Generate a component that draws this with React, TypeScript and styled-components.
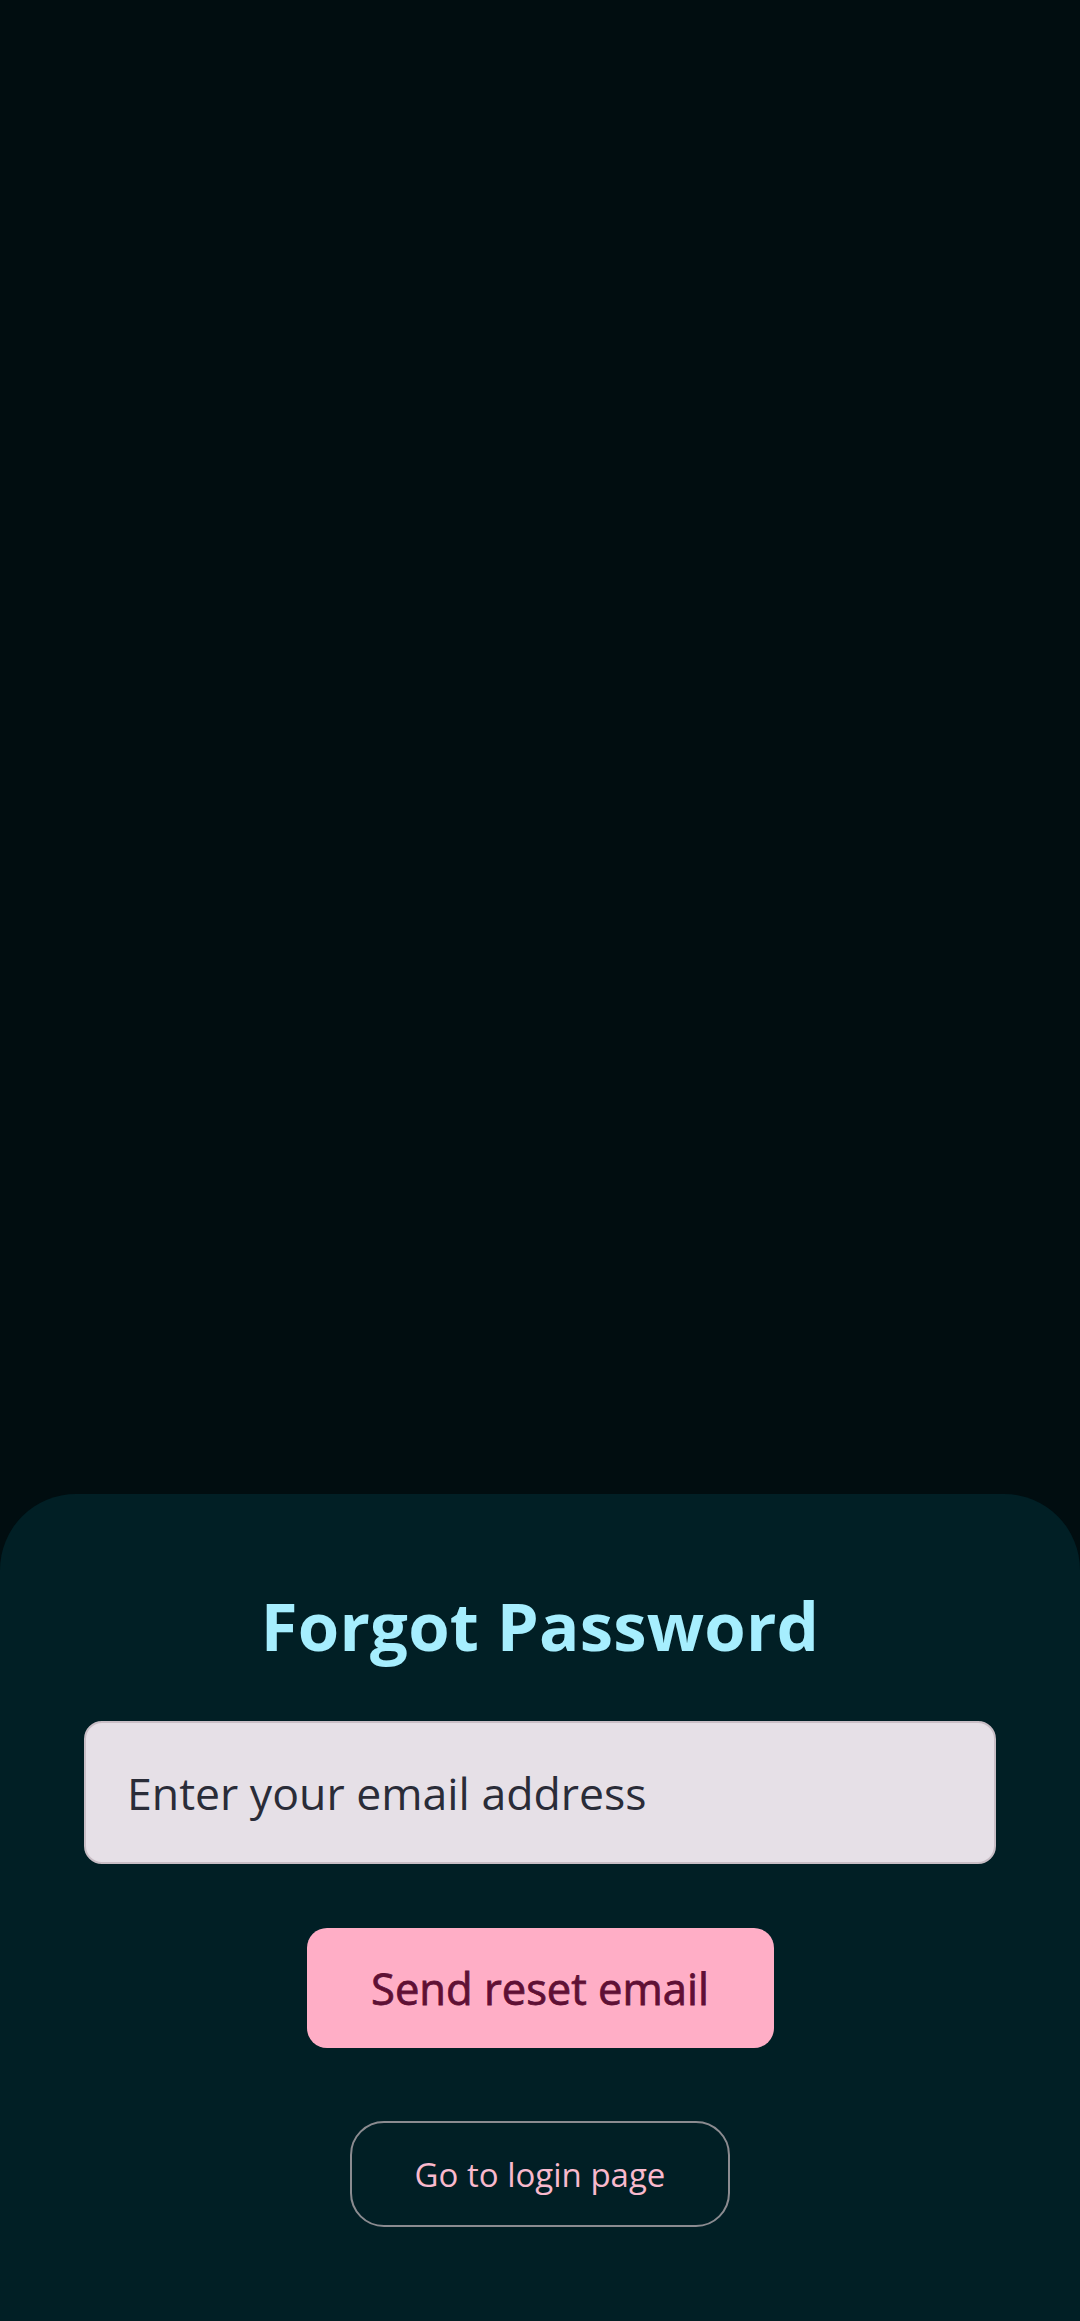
import React from "react";
import styled, { createGlobalStyle } from "styled-components";

const Global = createGlobalStyle`
  html, body {
    margin: 0;
    padding: 0;
    background: #010d10;
  }
  * { box-sizing: border-box; }
  body {
    font-family: "Open Sans", "Noto Sans", sans-serif;
  }
`;

const Page = styled.div`
  min-height: 2321px;
  display: flex;
  flex-direction: column;
  background: #010d10;
`;

const Spacer = styled.div`
  flex: 1;
`;

const Sheet = styled.section`
  height: 827px;
  background: #011f25;
  border-radius: 76px 76px 0 0;
  display: flex;
  flex-direction: column;
  align-items: center;
  padding: 85px 84px 0;
`;

const Title = styled.h1`
  margin: 0;
  font-size: 67px;
  line-height: normal;
  font-weight: 700;
  color: #a6eefe;
  letter-spacing: 0.2px;
`;

const EmailInput = styled.input`
  margin-top: 50px;
  width: 100%;
  height: 143px;
  border: 2px solid #c9bec6;
  border-radius: 18px;
  background: #e6e0e7;
  padding: 0 41px;
  font-family: "Open Sans", "Noto Sans", sans-serif;
  font-size: 44.6px;
  color: #2a2c38;
  outline: none;
  &::placeholder {
    color: #2a2c38;
    opacity: 1;
  }
`;

const PrimaryButton = styled.button`
  margin-top: 64px;
  height: 120px;
  width: 467px;
  padding: 0;
  border: none;
  border-radius: 20px;
  background: #ffaec6;
  color: #5f1035;
  font-family: "Open Sans", "Noto Sans", sans-serif;
  font-size: 43.5px;
  font-weight: 400;
  -webkit-text-stroke: 0.8px #5f1035;
  cursor: pointer;
`;

const OutlineButton = styled.button`
  margin-top: 73px;
  height: 106px;
  width: 380px;
  border: 2px solid #8b8b90;
  border-radius: 34px;
  background: transparent;
  color: #f9b9cd;
  font-family: "Open Sans", "Noto Sans", sans-serif;
  font-size: 33px;
  font-weight: 400;
  cursor: pointer;
`;

export default function App() {
  return (
    <>
      <Global />
      <Page>
        <Spacer />
        <Sheet>
          <Title>Forgot Password</Title>
          <EmailInput type="email" placeholder="Enter your email address" />
          <PrimaryButton>Send reset email</PrimaryButton>
          <OutlineButton>Go to login page</OutlineButton>
        </Sheet>
      </Page>
    </>
  );
}
